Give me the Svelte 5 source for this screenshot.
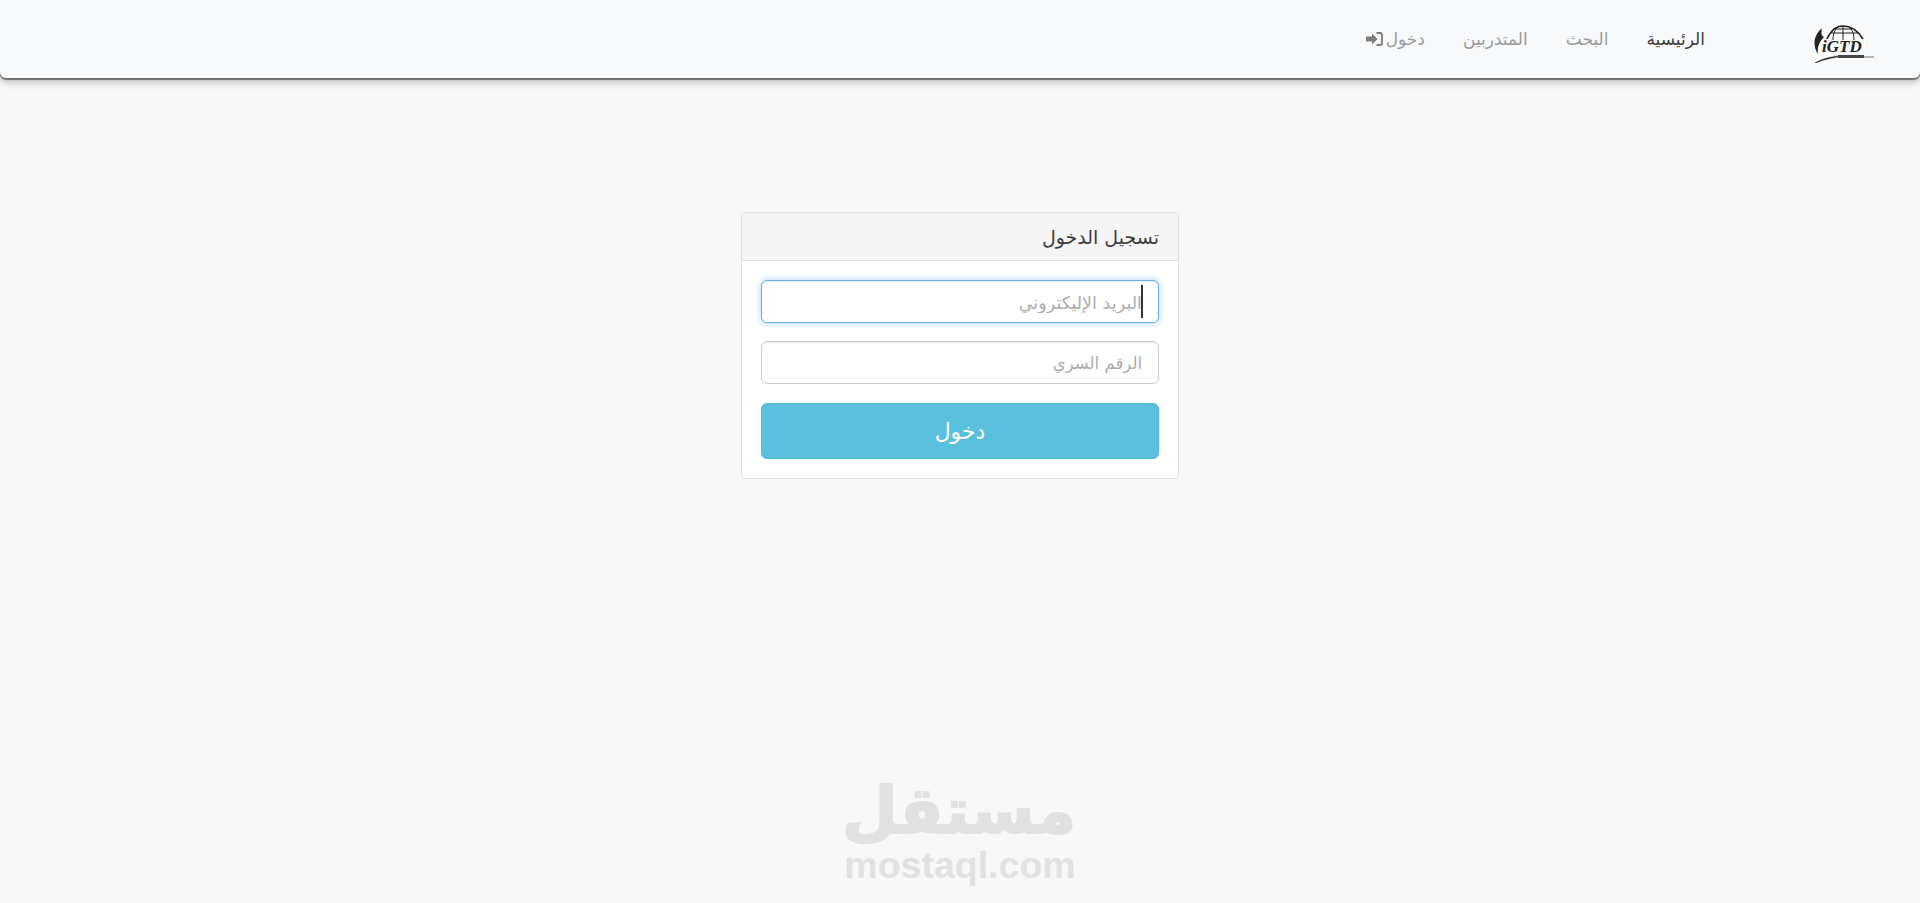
<script>
  const navItems = [
    { label: 'الرئيسية', active: true },
    { label: 'البحث' },
    { label: 'المتدربين' }
  ];
</script>

<div class="page" dir="rtl">
  <nav class="navbar">
    <a class="brand" href="#top" aria-label="iGTD">
      <svg class="logo" width="62" height="38" viewBox="0 0 62 38">
        <g fill="none" stroke="#222" stroke-width="1">
          <path d="M14 14 C18 5 24 1 30 1 C38 1 45 6 50 14" stroke-width="1.6" />
          <path d="M30 1 L30 15" />
          <path d="M24 3 C21 6 20 10 20 15" />
          <path d="M37 3 C40 6 41 10 41 15" />
          <path d="M17 8 L46 8" />
          <path d="M22 4 L39 4" />
        </g>
        <path d="M9 3 C1 10 -1 20 5 29 C4 22 6 17 11 12 C8 11 8 7 9 3 Z" fill="#222" />
        <path d="M2 38 C10 33 22 31 34 30.5 C22 32 12 34 2 38 Z" fill="#222" stroke="#222" stroke-width=".6" />
        <rect x="25" y="30" width="26" height="3" fill="#444" />
        <rect x="51" y="31.5" width="10" height="1" fill="#777" />
        <text x="9" y="27" class="logo-text">iGTD</text>
      </svg>
    </a>
    <ul class="links">
      {#each navItems as item}
        <li><a class="link" class:active={item.active} href="#top">{item.label}</a></li>
      {/each}
      <li>
        <a class="link" href="#top">دخول
          <svg class="login" width="17" height="14" viewBox="0 0 17 14">
            <path d="M0 4.5 H6 V1.5 L11.5 7 L6 12.5 V9.5 H0 Z" fill="#7d7d7d" />
            <path d="M10.5 1 H14 C15.4 1 16 2 16 3 V11 C16 12 15.4 13 14 13 H10.5" fill="none" stroke="#7d7d7d" stroke-width="1.8" />
          </svg>
        </a>
      </li>
    </ul>
  </nav>

  <main class="main">
    <section class="card">
      <header class="card-head">تسجيل الدخول</header>
      <form class="card-body" onsubmit={(e) => e.preventDefault()}>
        <div class="field focused">
          <input type="email" placeholder="البريد الإليكتروني" />
          <span class="caret"></span>
        </div>
        <div class="field">
          <input type="password" placeholder="الرقم السري" />
        </div>
        <button type="submit">دخول</button>
      </form>
    </section>
  </main>

  <div class="mark" dir="ltr">
    <div class="mark-ar" dir="rtl">مستقل</div>
    <div class="mark-en">mostaql.com</div>
  </div>
</div>

<style>
  :global(body) {
    margin: 0;
    background: #f8f8f8;
  }
  .page {
    position: relative;
    height: 903px;
    overflow: hidden;
    background: #f8f8f8;
    font-family: "DejaVu Sans", sans-serif;
    color: #333;
  }
  .navbar {
    display: flex;
    align-items: center;
    height: 78px;
    padding: 0 45px 0 0;
    box-sizing: border-box;
    background: #f8f9fa;
    border-radius: 0 0 6px 6px;
    box-shadow: 0 2px 1px #707070, 0 4px 8px rgba(0, 0, 0, 0.25);
  }
  .brand {
    display: block;
    height: 38px;
    margin-top: 10px;
    margin-left: 108px;
  }
  .logo {
    direction: ltr;
  }
  .logo-text {
    font-family: "Liberation Serif", serif;
    font-style: italic;
    font-weight: 700;
    font-size: 17px;
    fill: #222;
  }
  .links {
    display: flex;
    gap: 38px;
    margin: 0;
    padding: 0;
    list-style: none;
  }
  .link {
    display: flex;
    align-items: center;
    gap: 3px;
    font-size: 17px;
    line-height: 24px;
    color: #999;
    text-decoration: none;
  }
  .link.active {
    color: #3c3c3c;
  }
  .main {
    display: flex;
    justify-content: center;
    padding-top: 134px;
  }
  .card {
    width: 438px;
    box-sizing: border-box;
    background: #fff;
    border: 1px solid #dfdfdf;
    border-radius: 4px;
    overflow: hidden;
  }
  .card-head {
    height: 48px;
    box-sizing: border-box;
    padding: 0 19px;
    line-height: 49px;
    font-size: 19px;
    color: #3c3c3c;
    background: #f5f5f5;
    border-bottom: 1px solid #dfdfdf;
  }
  .card-body {
    display: flex;
    flex-direction: column;
    padding: 19px;
  }
  .field {
    position: relative;
    margin-bottom: 18px;
  }
  .field + .field {
    margin-bottom: 19px;
  }
  input {
    display: block;
    width: 100%;
    height: 43px;
    box-sizing: border-box;
    padding: 2px 16px 0;
    font: inherit;
    font-size: 16.5px;
    background: #fff;
    border: 1px solid #ccc;
    border-radius: 6px;
    outline: none;
    box-shadow: inset 0 1px 1px rgba(0, 0, 0, 0.075);
  }
  input::placeholder {
    color: #acacac;
    opacity: 1;
  }
  .focused input {
    font-size: 17.6px;
    border-color: #66afe9;
    box-shadow: inset 0 1px 1px rgba(0, 0, 0, 0.075), 0 0 6px rgba(102, 175, 233, 0.6);
  }
  .caret {
    position: absolute;
    top: 5px;
    right: 16px;
    width: 2px;
    height: 33px;
    background: #333;
  }
  button {
    height: 56px;
    font: inherit;
    font-size: 22px;
    color: #fff;
    background: #5bc0de;
    border: 1px solid #46b8da;
    border-radius: 6px;
  }
  .mark {
    position: absolute;
    left: 844px;
    top: 777px;
    width: 232px;
    color: #e1e1e1;
    text-align: center;
    font-weight: 700;
  }
  .mark-ar {
    font-size: 64px;
    line-height: 68px;
    -webkit-text-stroke: 2px #e1e1e1;
  }
  .mark-en {
    font-family: "Liberation Sans", sans-serif;
    font-size: 37.5px;
    line-height: 40px;
  }
</style>
